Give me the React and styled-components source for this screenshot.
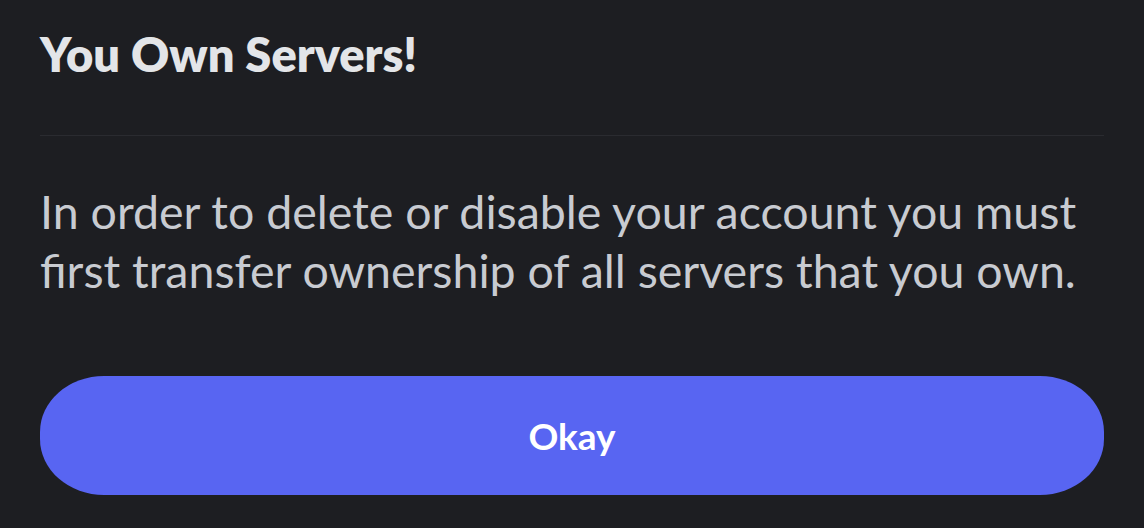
import React from "react";
import styled, { createGlobalStyle } from "styled-components";

const Global = createGlobalStyle`
  html, body { margin: 0; padding: 0; background: #1d1e22; }
  body { font-family: "Lato", "Noto Sans", sans-serif; }
`;

const Sheet = styled.div`
  width: 1144px;
  height: 528px;
  box-sizing: border-box;
  padding: 0 40px;
  background: #1d1e22;
  display: flex;
  flex-direction: column;
`;

const Title = styled.h1`
  margin: 0;
  padding-top: 26px;
  height: 135px;
  box-sizing: border-box;
  font-family: "Lato", sans-serif;
  font-size: 47px;
  line-height: 56px;
  font-weight: 800;
  color: #e3e5e8;
`;

const Divider = styled.hr`
  margin: 0;
  border: 0;
  height: 1px;
  background: #2a2b30;
`;

const Body = styled.p`
  margin: 0;
  padding-top: 46px;
  font-family: "Lato", sans-serif;
  font-size: 46.5px;
  line-height: 59px;
  font-weight: 400;
  color: #c8cbd1;
`;

const Button = styled.button`
  margin-top: 76px;
  height: 119px;
  width: 100%;
  flex-shrink: 0;
  border: 0;
  padding: 0;
  border-radius: 64px / 56px;
  background: #5865f2;
  color: #ffffff;
  font-family: "Lato", sans-serif;
  font-size: 37px;
  font-weight: 700;
  cursor: pointer;
`;

export default function App() {
  return (
    <>
      <Global />
      <Sheet>
        <Title>You Own Servers!</Title>
        <Divider />
        <Body>
          In order to delete or disable your account you must first transfer ownership of all servers that you own.
        </Body>
        <Button>Okay</Button>
      </Sheet>
    </>
  );
}
